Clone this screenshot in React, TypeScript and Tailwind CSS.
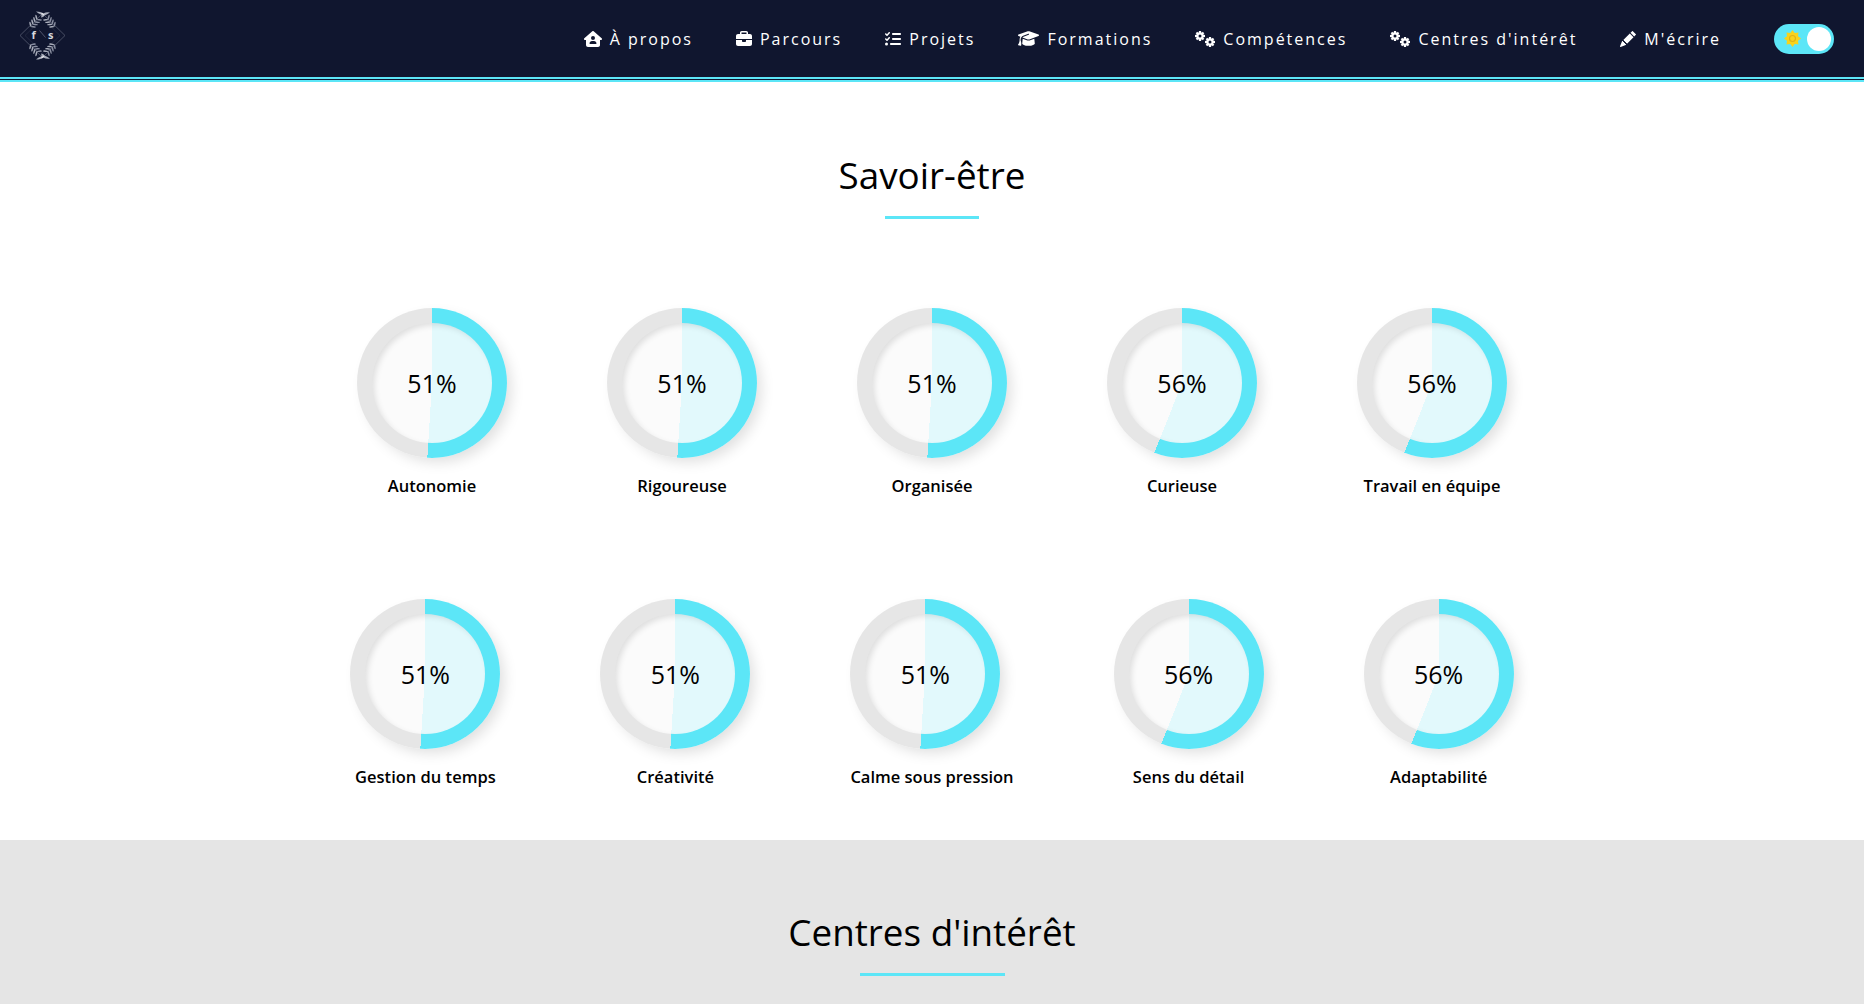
import type { ComponentType } from "react";
import { FaBriefcase, FaGraduationCap, FaHouseUser, FaListCheck } from "react-icons/fa6";
import { BsPencilFill } from "react-icons/bs";

type IconProps = { className?: string };

function Cog({ cx, cy }: { cx: number; cy: number }) {
  const teeth = [0, 45, 90, 135, 180, 225, 270, 315];
  return (
    <g>
      {teeth.map((r) => (
        <rect key={r} x={cx - 1.1} y={cy - 5} width="2.2" height="2.4" fill="currentColor" transform={`rotate(${r} ${cx} ${cy})`} />
      ))}
      <circle cx={cx} cy={cy} r="3.7" fill="currentColor" />
      <circle cx={cx} cy={cy} r="1.5" fill="#10162f" />
    </g>
  );
}

function Gears({ className }: IconProps) {
  return (
    <svg viewBox="0 0 20 16" className={className}>
      <Cog cx={5} cy={5} />
      <Cog cx={15} cy={11} />
    </svg>
  );
}

const links: { label: string; icon: ComponentType<IconProps>; size: string }[] = [
  { label: "À propos", icon: FaHouseUser, size: "h-[18px] w-[18px]" },
  { label: "Parcours", icon: FaBriefcase, size: "h-[16px] w-[16px]" },
  { label: "Projets", icon: FaListCheck, size: "h-[16px] w-[16px]" },
  { label: "Formations", icon: FaGraduationCap, size: "h-[21px] w-[21px]" },
  { label: "Compétences", icon: Gears, size: "h-[16px] w-[20px]" },
  { label: "Centres d'intérêt", icon: Gears, size: "h-[16px] w-[20px]" },
  { label: "M'écrire", icon: BsPencilFill, size: "h-[16px] w-[16px]" },
];

const rowOne = [
  { label: "Autonomie", value: 51 },
  { label: "Rigoureuse", value: 51 },
  { label: "Organisée", value: 51 },
  { label: "Curieuse", value: 56 },
  { label: "Travail en équipe", value: 56 },
];

const rowTwo = [
  { label: "Gestion du temps", value: 51 },
  { label: "Créativité", value: 51 },
  { label: "Calme sous pression", value: 51 },
  { label: "Sens du détail", value: 56 },
  { label: "Adaptabilité", value: 56 },
];

// one sprig of the logo wreath, drawn for the top half
function Sprig({ from, to }: { from: [number, number]; to: [number, number] }) {
  const angle = (Math.atan2(to[1] - from[1], to[0] - from[0]) * 180) / Math.PI;
  const steps = [0, 0.33, 0.66, 1];
  return (
    <g>
      <path d={`M${from[0]} ${from[1]} L${to[0]} ${to[1]}`} stroke="#6b7085" strokeWidth="0.5" />
      {steps.map((t) => {
        const x = from[0] + (to[0] - from[0]) * t;
        const y = from[1] + (to[1] - from[1]) * t;
        return (
          <g key={t} transform={`translate(${x} ${y}) rotate(${angle})`}>
            <ellipse cx="1.3" cy="-2" rx="2.6" ry="0.8" transform="rotate(-55 1.3 -2)" fill="#a9adba" />
            <ellipse cx="1.3" cy="2" rx="2.6" ry="0.8" transform="rotate(55 1.3 2)" fill="#8a8fa1" />
          </g>
        );
      })}
    </g>
  );
}

function WreathHalf() {
  return (
    <g>
      <path d="M36 11 Q41 11 43 13 Q47 11 50 12 Q47 14 44.5 15 Q43.5 17 41 17 Q42 15 41 14 Q38 13 36 11 Z" fill="#a9adba" />
      <path d="M41.5 12.5 L44 14.5" stroke="#e4e5ea" strokeWidth="1.2" />
      <Sprig from={[31, 26]} to={[37, 19]} />
      <Sprig from={[54, 26]} to={[48, 19]} />
    </g>
  );
}

function Logo() {
  return (
    <svg viewBox="18 8.5 50 60" className="h-[60px] w-[50px] shrink-0">
      <path d="M42.5 13 L65 35 L42.5 57 L20 35 Z" fill="none" stroke="#5f6478" strokeWidth="0.7" />
      <path d="M25 35 L42.5 18 L60 35 L42.5 52 Z" fill="none" stroke="#2c3249" strokeWidth="0.6" />
      <path d="M39.5 30 L45.5 37" stroke="#6b7085" strokeWidth="0.7" />
      <WreathHalf />
      <g transform="matrix(1 0 0 -1 0 70)">
        <WreathHalf />
      </g>
      <text x="31.5" y="38" fontSize="11" fontWeight="700" fill="#d5d7de" fontFamily="'Open Sans', sans-serif">f</text>
      <text x="48" y="38.5" fontSize="11" fontWeight="700" fill="#d5d7de" fontFamily="'Open Sans', sans-serif">s</text>
    </svg>
  );
}

function SunIcon() {
  const rays = [0, 45, 90, 135, 180, 225, 270, 315];
  return (
    <svg viewBox="0 0 24 24" className="h-[17px] w-[17px]">
      {rays.map((r) => (
        <path key={r} d="M12 0 L16.5 6 L7.5 6 Z" fill="#f7d31c" transform={`rotate(${r} 12 12)`} />
      ))}
      <circle cx="12" cy="12" r="8" fill="#f7d31c" />
      <circle cx="12" cy="12" r="4.2" fill="#f7d31c" stroke="#dfb315" strokeWidth="1.6" />
    </svg>
  );
}

function Gauge({ label, value }: { label: string; value: number }) {
  return (
    <div className="flex flex-col items-start px-[50px]">
      <div
        className="flex h-[150px] w-[150px] items-center justify-center rounded-full shadow-[6px_6px_14px_-2px_rgba(0,0,0,0.13)]"
        style={{ background: `conic-gradient(#5ce6f7 ${value}%, #e6e6e6 ${value}% 100%)` }}
      >
        <div
          className="flex h-[120px] w-[120px] items-center justify-center rounded-full shadow-[inset_3px_3px_6px_-1px_rgba(0,0,0,0.12)]"
          style={{ background: `conic-gradient(#e2f9fc ${value}%, #fbfbfb ${value}% 100%)` }}
        >
          <span className="text-[25px] leading-none text-black">{value}%</span>
        </div>
      </div>
      <p className="mt-[16px] w-full text-center text-[16.5px] leading-[24px] font-semibold whitespace-nowrap text-black">
        {label}
      </p>
    </div>
  );
}

function Heading({ title, bar }: { title: string; bar: string }) {
  return (
    <div className="flex flex-col items-center">
      <h2 className="text-[36.8px] leading-[47px] text-black">{title}</h2>
      <div className={`mt-[17px] h-[3px] bg-[#5ce6f7] ${bar}`} />
    </div>
  );
}

export default function App() {
  return (
    <div className="h-[1004px] overflow-hidden bg-white font-['Open_Sans',sans-serif]">
      <header className="flex h-[82px] items-center border-b-[5px] border-double border-[#5ce6f7] bg-[#10162f] pr-[30px] pl-[18px]">
        <Logo />
        <nav className="ml-auto flex items-center gap-[43px]">
          {links.map(({ label, icon: Icon, size }) => (
            <a key={label} className="flex items-center gap-[8px] text-[16px] tracking-[2px] whitespace-nowrap text-white">
              <Icon className={size} />
              {label}
            </a>
          ))}
        </nav>
        <div className="ml-[53px] flex h-[30px] w-[60px] items-center justify-between rounded-full bg-[#5ce6f7] pr-[3px] pl-[10px]">
          <SunIcon />
          <div className="h-[24px] w-[24px] rounded-full bg-white" />
        </div>
      </header>

      <section className="flex h-[758px] flex-col items-center pt-[70px]">
        <Heading title="Savoir-être" bar="w-[94px]" />
        <div className="mt-[89px] flex justify-center">
          {rowOne.map((g) => (
            <Gauge key={g.label} {...g} />
          ))}
        </div>
        <div className="mt-[101px] flex justify-center">
          {rowTwo.map((g) => (
            <Gauge key={g.label} {...g} />
          ))}
        </div>
      </section>

      <section className="h-[164px] bg-[#e5e5e5] pt-[69px]">
        <Heading title="Centres d'intérêt" bar="w-[145px]" />
      </section>
    </div>
  );
}
